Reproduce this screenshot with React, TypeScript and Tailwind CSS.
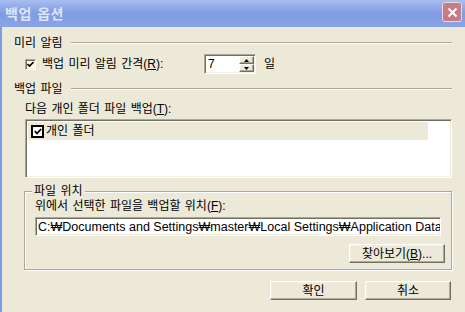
const font = { fontFamily: '"Liberation Sans", "Noto Sans CJK KR", sans-serif' };

function Etched() {
  return <div className="flex-1 h-[2px] border-t border-[#aca899] border-b border-b-white" />;
}

function SectionHeader({ label }: { label: string }) {
  return (
    <div className="flex items-center h-[14px]">
      <span className="pr-[8px]">{label}</span>
      <Etched />
    </div>
  );
}

const sunken =
  "border border-t-[#aca899] border-l-[#aca899] border-r-white border-b-white bg-white shadow-[inset_1px_1px_0_#716f64,inset_-1px_-1px_0_#f1efe2]";
const raised =
  "border border-t-white border-l-white border-r-[#716f64] border-b-[#716f64] bg-[#ece9d8] shadow-[inset_-1px_-1px_0_#aca899,inset_1px_1px_0_#f1efe2]";

function SpinButton({ up }: { up?: boolean }) {
  return (
    <div className={`${raised} flex-1 flex items-center justify-center`}>
      <svg width="5" height="3" viewBox="0 0 5 3">
        <path d={up ? "M2.5 0 L5 3 L0 3 Z" : "M0 0 L5 0 L2.5 3 Z"} fill="#000" />
      </svg>
    </div>
  );
}

export default function App() {
  return (
    <div
      className="w-[465px] h-[312px] overflow-hidden bg-[#ece9d8] text-[12px] text-black leading-[14px] [word-spacing:1px]"
      style={font}
    >
      {/* Title bar */}
      <div className="h-[27px] flex items-center justify-between pl-[5px] pr-[3px] bg-gradient-to-b from-[#a9bdf0] via-[#7f9be2] to-[#8aa5e7]">
        <span className="text-[14px] font-bold text-[#dce6f8] tracking-[0.5px]">백업 옵션</span>
        <div className="w-[20px] h-[20px] mb-[3px] rounded-[3px] border border-[#ecd8dc] bg-[#c47d85] flex items-center justify-center">
          <svg width="11" height="11" viewBox="0 0 11 11">
            <path d="M1.5 1.5 L9.5 9.5 M9.5 1.5 L1.5 9.5" stroke="#fff" strokeWidth="2" />
          </svg>
        </div>
      </div>

      {/* Body */}
      <div className="h-[285px] border-l-2 border-[#7f9de4] pl-[12px] pr-[13px] pt-[9px] flex flex-col">
        <SectionHeader label="미리 알림" />

        <div className="mt-[4px] h-[20px] flex items-center pl-[11px]">
          <div className={`${sunken} w-[11px] h-[11px] flex items-center justify-center`}>
            <svg width="7" height="7" viewBox="0 0 7 7">
              <path d="M0.5 3 L2.5 5 L6.5 1" stroke="#000" strokeWidth="1.6" fill="none" />
            </svg>
          </div>
          <span className="ml-[6px] w-[162px]">
            백업 미리 알림 간격(<u>R</u>):
          </span>
          <div className={`${sunken} w-[52px] h-[20px] flex`}>
            <span className="flex-1 pl-[3px] pt-[2px]">7</span>
            <div className="w-[16px] flex flex-col p-[1px] pl-0">
              <SpinButton up />
              <SpinButton />
            </div>
          </div>
          <span className="ml-[8px]">일</span>
        </div>

        <div className="mt-[8px]">
          <SectionHeader label="백업 파일" />
        </div>

        <div className="mt-[6px] pl-[11px]">
          다음 개인 폴더 파일 백업(<u>T</u>):
        </div>

        <div className={`${sunken} mt-[3px] ml-[11px] h-[59px] p-[2px] pr-[23px]`}>
          <div className="h-[18px] bg-[#ece9d8] flex items-center pl-[3px]">
            <div className="w-[13px] h-[13px] border-2 border-black bg-white flex items-center justify-center">
              <svg width="8" height="7" viewBox="0 0 8 7">
                <path d="M0.8 3.2 L3 5.4 L7.2 1" stroke="#000" strokeWidth="1.8" fill="none" />
              </svg>
            </div>
            <span className="ml-[2px]">개인 폴더</span>
          </div>
        </div>

        {/* Group box: 파일 위치 */}
        <div className="relative mt-[13px] ml-[10px] h-[79px] border border-[#aca899] shadow-[1px_1px_0_#fff,inset_1px_1px_0_#fff] pt-[7px] px-[10px]">
          <span className="absolute -top-[8px] left-[7px] px-[2px] bg-[#ece9d8]">파일 위치</span>
          <div>
            위에서 선택한 파일을 백업할 위치(<u>F</u>):
          </div>
          <div
            className={`${sunken} mt-[4px] h-[19px] overflow-hidden whitespace-nowrap pl-[2px] pt-[2px] text-[12.5px] [word-spacing:0px]`}
          >
            C:₩Documents and Settings₩master₩Local Settings₩Application Data
          </div>
          <div className="mt-[8px] flex justify-end -mr-[4px]">
            <button className={`${raised} w-[96px] h-[19px] leading-[14px]`}>
              찾아보기(<u>B</u>)...
            </button>
          </div>
        </div>

        <div className="mt-[11px] flex justify-end gap-[8px] pr-[1px]">
          <button className={`${raised} w-[87px] h-[19px] leading-[14px]`}>확인</button>
          <button className={`${raised} w-[86px] h-[19px] leading-[14px]`}>취소</button>
        </div>
      </div>
    </div>
  );
}
